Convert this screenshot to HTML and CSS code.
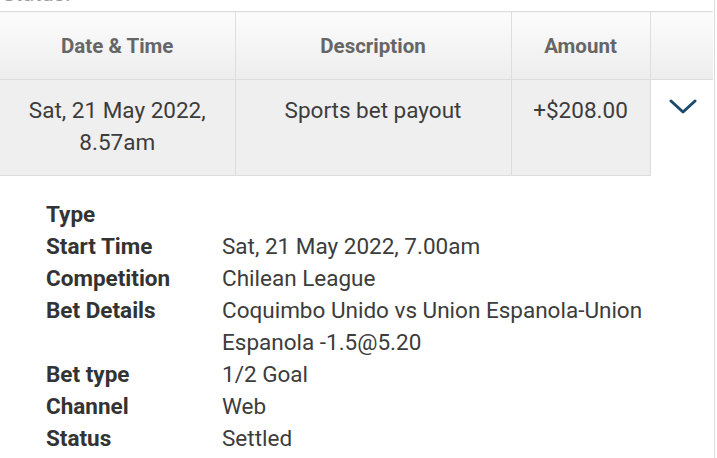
FILE: index.html
```html
<!doctype html>
<html>
<head>
  <title>Transaction history</title>
  <link rel="stylesheet" href="styles.css">
</head>
<body>
<div class="panel">
	<div class="panel-title">Status:</div>

	<table class="txn-table">
		<thead>
			<tr>
				<th class="col-date">Date &amp; Time</th>
				<th class="col-desc">Description</th>
				<th class="col-amount">Amount</th>
				<th class="col-toggle"></th>
			</tr>
		</thead>
		<tbody>
			<tr class="txn-row">
				<td>Sat, 21 May 2022,<br />8.57am</td>
				<td>Sports bet payout</td>
				<td>+$208.00</td>
				<td class="toggle-cell">
					<svg class="chevron" width="28" height="16" viewBox="0 0 28 16">
						<path d="M2 2 L14 13 L26 2" fill="none" stroke="#1d4a6b" stroke-width="3" stroke-linecap="round" stroke-linejoin="round" />
					</svg>
				</td>
			</tr>
		</tbody>
	</table>

	<dl class="bet-details">
		<dt>Type</dt>
		<dd></dd>
		<dt>Start Time</dt>
		<dd>Sat, 21 May 2022, 7.00am</dd>
		<dt>Competition</dt>
		<dd>Chilean League</dd>
		<dt>Bet Details</dt>
		<dd>Coquimbo Unido vs Union Espanola-Union Espanola -1.5@5.20</dd>
		<dt>Bet type</dt>
		<dd>1/2 Goal</dd>
		<dt>Channel</dt>
		<dd>Web</dd>
		<dt>Status</dt>
		<dd>Settled</dd>
	</dl>
</div>
</body>
</html>
```

FILE: styles.css
```css
*,
*:before,
*:after {
	box-sizing: border-box;
}

body {
	margin: 0;
	background: #fff;
	font-family: Roboto, "Liberation Sans", sans-serif;
	color: #3a3a3a;
	overflow: hidden;
}

.panel {
	width: 715px;
	height: 459px;
	padding-top: 1px;
	margin-top: -1px;
	border-right: 1px solid #dcdcdc;
	overflow: hidden;
}

.panel-title {
	margin-top: -18px;
	height: 29px;
	padding-left: 2px;
	font-size: 22px;
	line-height: 24px;
	color: #9a9a9a;
}

.txn-table {
	width: 714px;
	border-collapse: collapse;
	border-top: 1px solid #dedede;
	table-layout: fixed;
}

.txn-table th {
	height: 68px;
	padding: 0;
	background: linear-gradient(#fcfcfc, #ededed);
	border-bottom: 1px solid #dcdcdc;
	border-left: 1px solid #dedede;
	font-size: 20.5px;
	font-weight: bold;
	color: #666;
	vertical-align: middle;
}

.txn-table th:first-child,
.txn-table td:first-child {
	border-left: none;
}

.col-date { width: 235px; }
.col-desc { width: 276px; }
.col-amount { width: 139px; }
.col-toggle {
	width: 64px;
	border-right: 2px solid #fff;
}

.txn-table td {
	height: 96px;
	padding: 14px 0 0;
	background: #efefef;
	border-left: 1px solid #dcdcdc;
	border-bottom: 1px solid #dcdcdc;
	font-size: 22.5px;
	line-height: 32px;
	color: #3c3c3c;
	text-align: center;
	vertical-align: top;
}

.txn-table td.toggle-cell {
	background: #fff;
	border-bottom: none;
	padding-top: 19px;
	padding-left: 2px;
}

.chevron {
	display: block;
	margin: 0 auto;
}

.bet-details {
	display: grid;
	grid-template-columns: 176px 1fr;
	margin: 22px 0 0 46px;
	width: 640px;
	font-size: 22.5px;
	line-height: 32px;
}

.bet-details dt {
	font-weight: bold;
	color: #333;
}

.bet-details dd {
	margin: 0;
	color: #3c3c3c;
}
```
